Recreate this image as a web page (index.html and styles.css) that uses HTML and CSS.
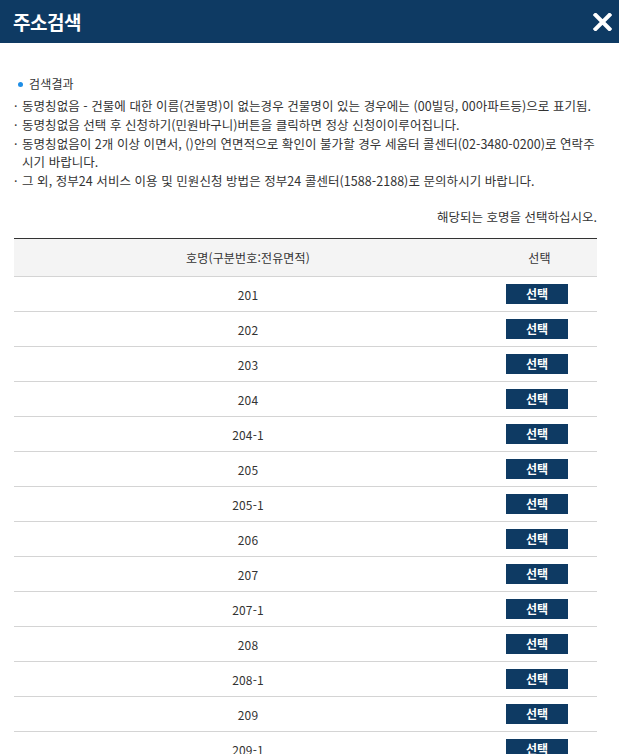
FILE: index.html
```html
<!DOCTYPE html>
<html lang="ko">
<head>
<meta charset="utf-8">
<title>주소검색</title>
<link rel="stylesheet" href="styles.css">
</head>
<body>
<header class="top">
  <h1 class="title">주소검색</h1>
  <button class="close" aria-label="닫기">
    <svg width="19" height="18" viewBox="0 0 19 18"><path d="M2.5 2 L16.5 16 M16.5 2 L2.5 16" stroke="#fff" stroke-width="4" stroke-linecap="square"/></svg>
  </button>
</header>
<main class="content">
  <h2 class="sect"><span class="dot"></span>검색결과</h2>
  <ul class="notes">
    <li>동명칭없음 - 건물에 대한 이름(건물명)이 없는경우 건물명이 있는 경우에는 (00빌딩, 00아파트등)으로 표기됨.</li>
    <li>동명칭없음 선택 후 신청하기(민원바구니)버튼을 클릭하면 정상 신청이이루어집니다.</li>
    <li>동명칭없음이 2개 이상 이면서, ()안의 연면적으로 확인이 불가할 경우 세움터 콜센터(02-3480-0200)로 연락주시기 바랍니다.</li>
    <li>그 외, 정부24 서비스 이용 및 민원신청 방법은 정부24 콜센터(1588-2188)로 문의하시기 바랍니다.</li>
  </ul>
  <p class="guide">해당되는 호명을 선택하십시오.</p>
  <table class="list">
    <thead>
      <tr><th class="c1">호명(구분번호:전유면적)</th><th class="c2">선택</th></tr>
    </thead>
    <tbody>
      <tr><td>201</td><td><button class="pick">선택</button></td></tr>
      <tr><td>202</td><td><button class="pick">선택</button></td></tr>
      <tr><td>203</td><td><button class="pick">선택</button></td></tr>
      <tr><td>204</td><td><button class="pick">선택</button></td></tr>
      <tr><td>204-1</td><td><button class="pick">선택</button></td></tr>
      <tr><td>205</td><td><button class="pick">선택</button></td></tr>
      <tr><td>205-1</td><td><button class="pick">선택</button></td></tr>
      <tr><td>206</td><td><button class="pick">선택</button></td></tr>
      <tr><td>207</td><td><button class="pick">선택</button></td></tr>
      <tr><td>207-1</td><td><button class="pick">선택</button></td></tr>
      <tr><td>208</td><td><button class="pick">선택</button></td></tr>
      <tr><td>208-1</td><td><button class="pick">선택</button></td></tr>
      <tr><td>209</td><td><button class="pick">선택</button></td></tr>
      <tr><td>209-1</td><td><button class="pick">선택</button></td></tr>
      <tr><td>210</td><td><button class="pick">선택</button></td></tr>
    </tbody>
  </table>
</main>
</body>
</html>
```
FILE: styles.css
```css
* { box-sizing: border-box; }
html, body { margin: 0; padding: 0; background: #fff; }
body {
  font-family: "Noto Sans CJK KR", "Noto Sans", sans-serif;
  font-size: 12px;
  color: #333;
  letter-spacing: 0.15px;
}
.top {
  height: 43px;
  background: #0e3a63;
  display: flex;
  align-items: center;
  justify-content: space-between;
  padding: 0 7px 0 13px;
}
.title {
  margin: 0;
  font-size: 19px;
  font-weight: 700;
  color: #fff;
  letter-spacing: -0.5px;
  line-height: 24px;
}
.close {
  background: none;
  border: 0;
  padding: 0;
  margin: 0;
  width: 19px;
  height: 18px;
  display: block;
}
.close svg { display: block; }
.content { padding: 32px 22px 0 14px; }
.sect {
  margin: 0 0 4px 0;
  font-size: 12px;
  font-weight: 400;
  color: #333;
  display: flex;
  align-items: center;
  line-height: 18px;
  padding-left: 4px;
}
.dot {
  width: 5px;
  height: 5px;
  border-radius: 50%;
  background: #1f8ee6;
  margin-right: 6px;
}
.notes {
  list-style: none;
  margin: 0;
  padding: 0;
  font-size: 12.5px;
  letter-spacing: 0.05px;
}
.notes li {
  position: relative;
  padding-left: 8px;
  line-height: 18px;
  margin-bottom: 1px;
}
.notes li::before {
  content: "·";
  position: absolute;
  left: 0;
  top: 0;
}
.guide {
  margin: 18px 0 0 0;
  text-align: right;
  line-height: 18px;
  font-size: 12.5px;
  letter-spacing: 0;
}
.list {
  width: 583px;
  border-collapse: collapse;
  margin-top: 12px;
  border-top: 1px solid #333;
}
.list th {
  background: #f4f4f4;
  font-weight: 400;
  height: 38px;
  border-bottom: 1px solid #d4d4d4;
  padding: 0;
  text-align: center;
}
.list .c1 { width: 468px; }
.list td {
  height: 35px;
  border-bottom: 1px solid #d4d4d4;
  padding: 0;
  text-align: center;
}
.pick {
  width: 62px;
  height: 20px;
  border: 0;
  background: #0e3a63;
  color: #fff;
  font-family: inherit;
  font-size: 12px;
  font-weight: 700;
  letter-spacing: 0;
  padding: 0;
  line-height: 20px;
  display: inline-block;
  vertical-align: middle;
  margin-right: 5px;
}
```
